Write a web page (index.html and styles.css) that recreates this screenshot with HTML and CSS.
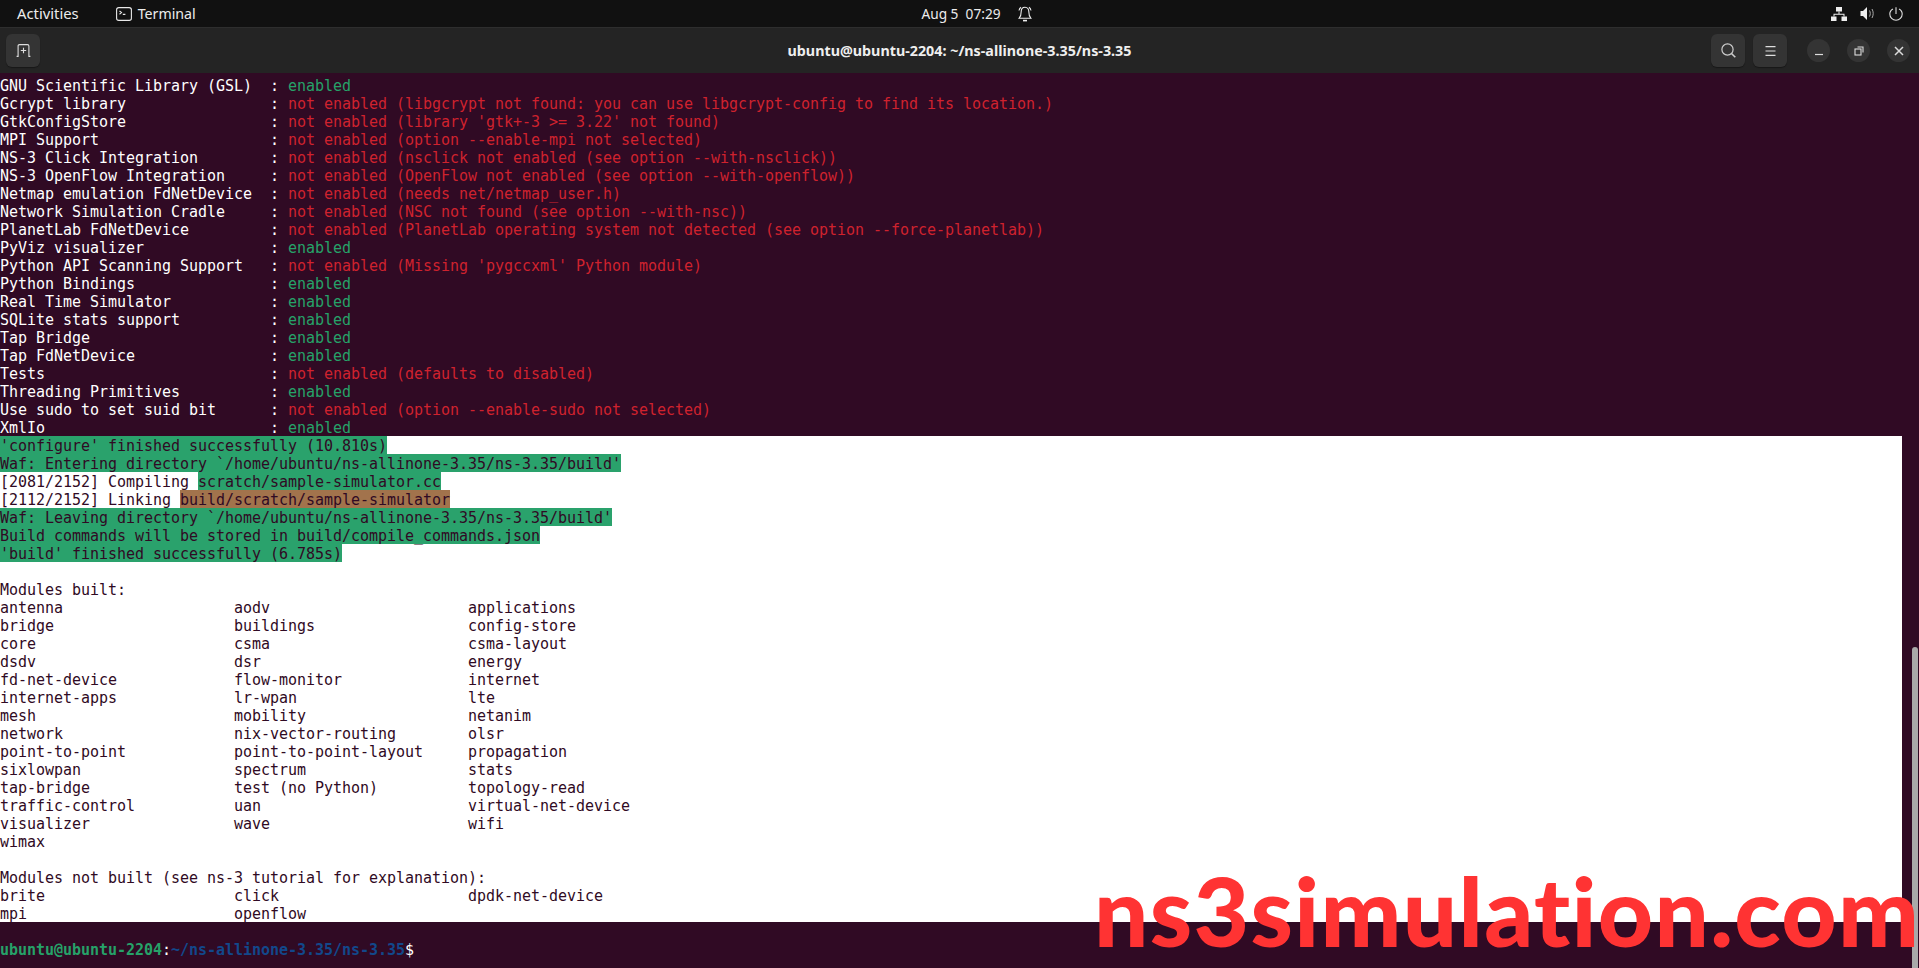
FILE: index.html
```html
<!DOCTYPE html>
<html lang="en">
<head>
<meta charset="utf-8">
<title>Terminal</title>
<link rel="stylesheet" href="styles.css">
</head>
<body>
<div class="screen">
  <header class="topbar">
    <div class="topbar-left">
      <span class="activities">Activities</span>
      <span class="app">
        <svg class="app-icon" width="16" height="14" viewBox="0 0 16 14" fill="none" stroke="#e8e8e8" stroke-width="1.1"><rect x="0.6" y="0.6" width="14.8" height="12.8" rx="2.2"/><path d="M3.5 4l2 1.6-2 1.6M6.8 7.4h2.6"/></svg>
        Terminal
      </span>
    </div>
    <div class="clock">
      <span>Aug 5&nbsp;&nbsp;07:29</span>
      <svg class="bell" width="14" height="16" viewBox="0 0 14 16" fill="none" stroke="#eee" stroke-width="1.1"><path d="M7 1.2c-2.6 0-3.8 2-3.8 4.4 0 2.6-.5 5-2 6.6h11.600c-1.500-1.600-2-4-2-6.600 0-2.400-1.200-4.400-3.800-4.400z"/><path d="M1 4.500C1.300 3 2 2 3 1.200M13 4.500C12.700 3 12 2 11 1.200"/><path d="M5 14.600h4" stroke-width="1.600"/></svg>
    </div>
    <div class="tray">
      <svg width="16" height="14" viewBox="0 0 16 14" fill="#eee"><rect x="5" y="0" width="6" height="4.500"/><rect x="0" y="9.500" width="5.500" height="4.500"/><rect x="10.500" y="9.500" width="5.500" height="4.500"/><path d="M7.500 4.500h1v2.300h5v2.700h-1V7.800H3.500v1.700h-1V6.800h5z"/></svg>
      <svg width="16" height="15" viewBox="0 0 16 15" fill="none"><path d="M0.500 5h2.500L7 1v13L3 10H0.500z" fill="#eee"/><path d="M9.500 4.500c1 1.800 1 4.200 0 6M12 3c1.600 2.800 1.600 6.200 0 9" stroke="#aaa" stroke-width="1"/></svg>
      <svg width="14" height="14" viewBox="0 0 14 14" fill="none" stroke="#ddd" stroke-width="1.100"><path d="M4 2C2 3 .8 4.900.8 7.100a6.200 6.200 0 0 0 12.400 0C13.200 4.900 12 3 10 2M7 .2v6.800"/></svg>
    </div>
  </header>

  <div class="titlebar">
    <button class="tool-btn" type="button" aria-label="New tab">
      <svg width="15" height="13" viewBox="0 0 15 13" fill="none" stroke="#ddd" stroke-width="1.100"><path d="M.6 12.400h1.500V2c0-.9.500-1.400 1.400-1.400h8c.900 0 1.400.5 1.400 1.400v10.400h1.500M7.500 3.800v5.400M4.800 6.500h5.400"/></svg>
    </button>
    <div class="title">ubuntu@ubuntu-2204: ~/ns-allinone-3.35/ns-3.35</div>
    <div class="actions">
      <button class="tool-btn" type="button" aria-label="Search">
        <svg width="15" height="15" viewBox="0 0 15 15" fill="none" stroke="#ccc" stroke-width="1.200"><circle cx="6.500" cy="6.500" r="5.600"/><path d="M10.500 10.500l3.800 3.800" stroke-width="1.600"/></svg>
      </button>
      <button class="tool-btn" type="button" aria-label="Menu">
        <svg width="11" height="10" viewBox="0 0 11 10" fill="none" stroke="#ddd" stroke-width="1.100"><path d="M.5 .6h10M.5 5h10M.5 9.400h10"/></svg>
      </button>
      <div class="win-btns">
        <span class="win-btn"><svg width="10" height="10" viewBox="0 0 10 10" fill="none" stroke="#ddd" stroke-width="1.200"><path d="M1 8.500h8"/></svg></span>
        <span class="win-btn"><svg width="10" height="10" viewBox="0 0 10 10" fill="none" stroke="#ddd" stroke-width="1.100"><rect x="1" y="3" width="6" height="6"/><path d="M3.500 1H9v5.500"/></svg></span>
        <span class="win-btn"><svg width="10" height="10" viewBox="0 0 10 10" fill="none" stroke="#ddd" stroke-width="1.500"><path d="M1 1l8 8M9 1L1 9"/></svg></span>
      </div>
    </div>
  </div>

  <main class="terminal">
    <div class="out">
      <div class="ln">GNU Scientific Library (GSL)  : <span class="ok">enabled</span></div>
      <div class="ln">Gcrypt library                : <span class="no">not enabled (libgcrypt not found: you can use libgcrypt-config to find its location.)</span></div>
      <div class="ln">GtkConfigStore                : <span class="no">not enabled (library 'gtk+-3 &gt;= 3.22' not found)</span></div>
      <div class="ln">MPI Support                   : <span class="no">not enabled (option --enable-mpi not selected)</span></div>
      <div class="ln">NS-3 Click Integration        : <span class="no">not enabled (nsclick not enabled (see option --with-nsclick))</span></div>
      <div class="ln">NS-3 OpenFlow Integration     : <span class="no">not enabled (OpenFlow not enabled (see option --with-openflow))</span></div>
      <div class="ln">Netmap emulation FdNetDevice  : <span class="no">not enabled (needs net/netmap_user.h)</span></div>
      <div class="ln">Network Simulation Cradle     : <span class="no">not enabled (NSC not found (see option --with-nsc))</span></div>
      <div class="ln">PlanetLab FdNetDevice         : <span class="no">not enabled (PlanetLab operating system not detected (see option --force-planetlab))</span></div>
      <div class="ln">PyViz visualizer              : <span class="ok">enabled</span></div>
      <div class="ln">Python API Scanning Support   : <span class="no">not enabled (Missing 'pygccxml' Python module)</span></div>
      <div class="ln">Python Bindings               : <span class="ok">enabled</span></div>
      <div class="ln">Real Time Simulator           : <span class="ok">enabled</span></div>
      <div class="ln">SQLite stats support          : <span class="ok">enabled</span></div>
      <div class="ln">Tap Bridge                    : <span class="ok">enabled</span></div>
      <div class="ln">Tap FdNetDevice               : <span class="ok">enabled</span></div>
      <div class="ln">Tests                         : <span class="no">not enabled (defaults to disabled)</span></div>
      <div class="ln">Threading Primitives          : <span class="ok">enabled</span></div>
      <div class="ln">Use sudo to set suid bit      : <span class="no">not enabled (option --enable-sudo not selected)</span></div>
      <div class="ln">XmlIo                         : <span class="ok">enabled</span></div>
    </div>
    <div class="out paper">
      <div class="ln"><span class="hl-green">'configure' finished successfully (10.810s)</span></div>
      <div class="ln"><span class="hl-green">Waf: Entering directory `/home/ubuntu/ns-allinone-3.35/ns-3.35/build'</span></div>
      <div class="ln">[2081/2152] Compiling <span class="hl-green">scratch/sample-simulator.cc</span></div>
      <div class="ln">[2112/2152] Linking <span class="hl-brown">build/scratch/sample-simulator</span></div>
      <div class="ln"><span class="hl-green">Waf: Leaving directory `/home/ubuntu/ns-allinone-3.35/ns-3.35/build'</span></div>
      <div class="ln"><span class="hl-green">Build commands will be stored in build/compile_commands.json</span></div>
      <div class="ln"><span class="hl-green">'build' finished successfully (6.785s)</span></div>
      <div class="ln"></div>
      <div class="ln">Modules built:</div>
      <div class="ln">antenna                   aodv                      applications</div>
      <div class="ln">bridge                    buildings                 config-store</div>
      <div class="ln">core                      csma                      csma-layout</div>
      <div class="ln">dsdv                      dsr                       energy</div>
      <div class="ln">fd-net-device             flow-monitor              internet</div>
      <div class="ln">internet-apps             lr-wpan                   lte</div>
      <div class="ln">mesh                      mobility                  netanim</div>
      <div class="ln">network                   nix-vector-routing        olsr</div>
      <div class="ln">point-to-point            point-to-point-layout     propagation</div>
      <div class="ln">sixlowpan                 spectrum                  stats</div>
      <div class="ln">tap-bridge                test (no Python)          topology-read</div>
      <div class="ln">traffic-control           uan                       virtual-net-device</div>
      <div class="ln">visualizer                wave                      wifi</div>
      <div class="ln">wimax</div>
      <div class="ln"></div>
      <div class="ln">Modules not built (see ns-3 tutorial for explanation):</div>
      <div class="ln">brite                     click                     dpdk-net-device</div>
      <div class="ln">mpi                       openflow</div>
    </div>
    <div class="out prompt">
      <div class="ln"><span class="p-user">ubuntu@ubuntu-2204</span>:<span class="p-path">~/ns-allinone-3.35/ns-3.35</span>$</div>
    </div>
    <div class="scrollbar"></div>
    <div class="watermark">ns3simulation.com</div>
  </main>
</div>
</body>
</html>
```

FILE: styles.css
```css
* { box-sizing: border-box; }
html, body { margin: 0; padding: 0; height: 100%; overflow: hidden; background: #300a24; }
.screen { display: flex; flex-direction: column; height: 968px; width: 1919px; }

.topbar {
  height: 27px; flex: none; background: #111111; color: #ececec;
  display: grid; grid-template-columns: 1fr auto 1fr; align-items: center;
  font: 400 14px/27px "Noto Sans", sans-serif;
}
.topbar-left { display: flex; align-items: center; padding-left: 17px; gap: 37px; }
.activities { font-size: 14.8px; }
.app { display: flex; align-items: center; gap: 6px; font-size: 14.200px; }
.app-icon { display: block; }
.clock { display: flex; align-items: center; gap: 17px; font-size: 13.700px; padding-left: 34px; }
.bell { display: block; }
.tray { display: flex; justify-content: flex-end; align-items: center; gap: 13px; padding-right: 16px; }
.tray svg { display: block; }

.titlebar {
  height: 46px; flex: none; background: #242424; border-top: 1px solid #2e2e2e;
  display: flex; align-items: center; justify-content: space-between;
  padding: 0 9px 0 6px; position: relative; color: #eeeeee;
}
.title {
  text-align: center; font: 700 14.300px/20px "Noto Sans", sans-serif;
  position: absolute; left: 0; right: 0; pointer-events: none;
}
.tool-btn {
  width: 34px; height: 33px; border: 0; padding: 0; border-radius: 6px; background: #343434;
  display: flex; align-items: center; justify-content: center;
  box-shadow: 0 1px 1px rgba(0,0,0,.35);
}
.actions { display: flex; align-items: center; gap: 8px; }
.win-btns { display: flex; align-items: center; gap: 17px; margin-left: 12px; }
.win-btn {
  width: 23px; height: 23px; border-radius: 50%; background: #343434;
  display: flex; align-items: center; justify-content: center;
}

.terminal { flex: 1; position: relative; padding-top: 3px; background: #300a24; overflow: hidden; }
.out { font: 400 15px/21px "DejaVu Sans Mono", monospace; letter-spacing: -0.03px; color: #ffffff; }
.ln { height: 18px; white-space: pre; }
.ok { color: #26a269; }
.no { color: #cf222e; }
.paper { background: #ffffff; color: #300a24; width: 1902px; }
.hl-green, .hl-brown { display: inline-block; height: 18px; vertical-align: top; }
.hl-green { background: #2aa26c; }
.hl-brown { background: #a2734c; }
.prompt { margin-top: 18px; }
.p-user { color: #26a269; font-weight: 700; }
.p-path { color: #12488b; font-weight: 700; }

.scrollbar {
  position: absolute; right: 1px; top: 574px; bottom: 0; width: 6px; background: #a9a9a9;
  border-radius: 3px 3px 0 0;
}
.watermark {
  position: absolute; left: 1094px; top: 787px; white-space: nowrap;
  font: 900 96px/100px "Lato", sans-serif; letter-spacing: 1.3px; color: #ff3333; font-variant-ligatures: none;
}
```
